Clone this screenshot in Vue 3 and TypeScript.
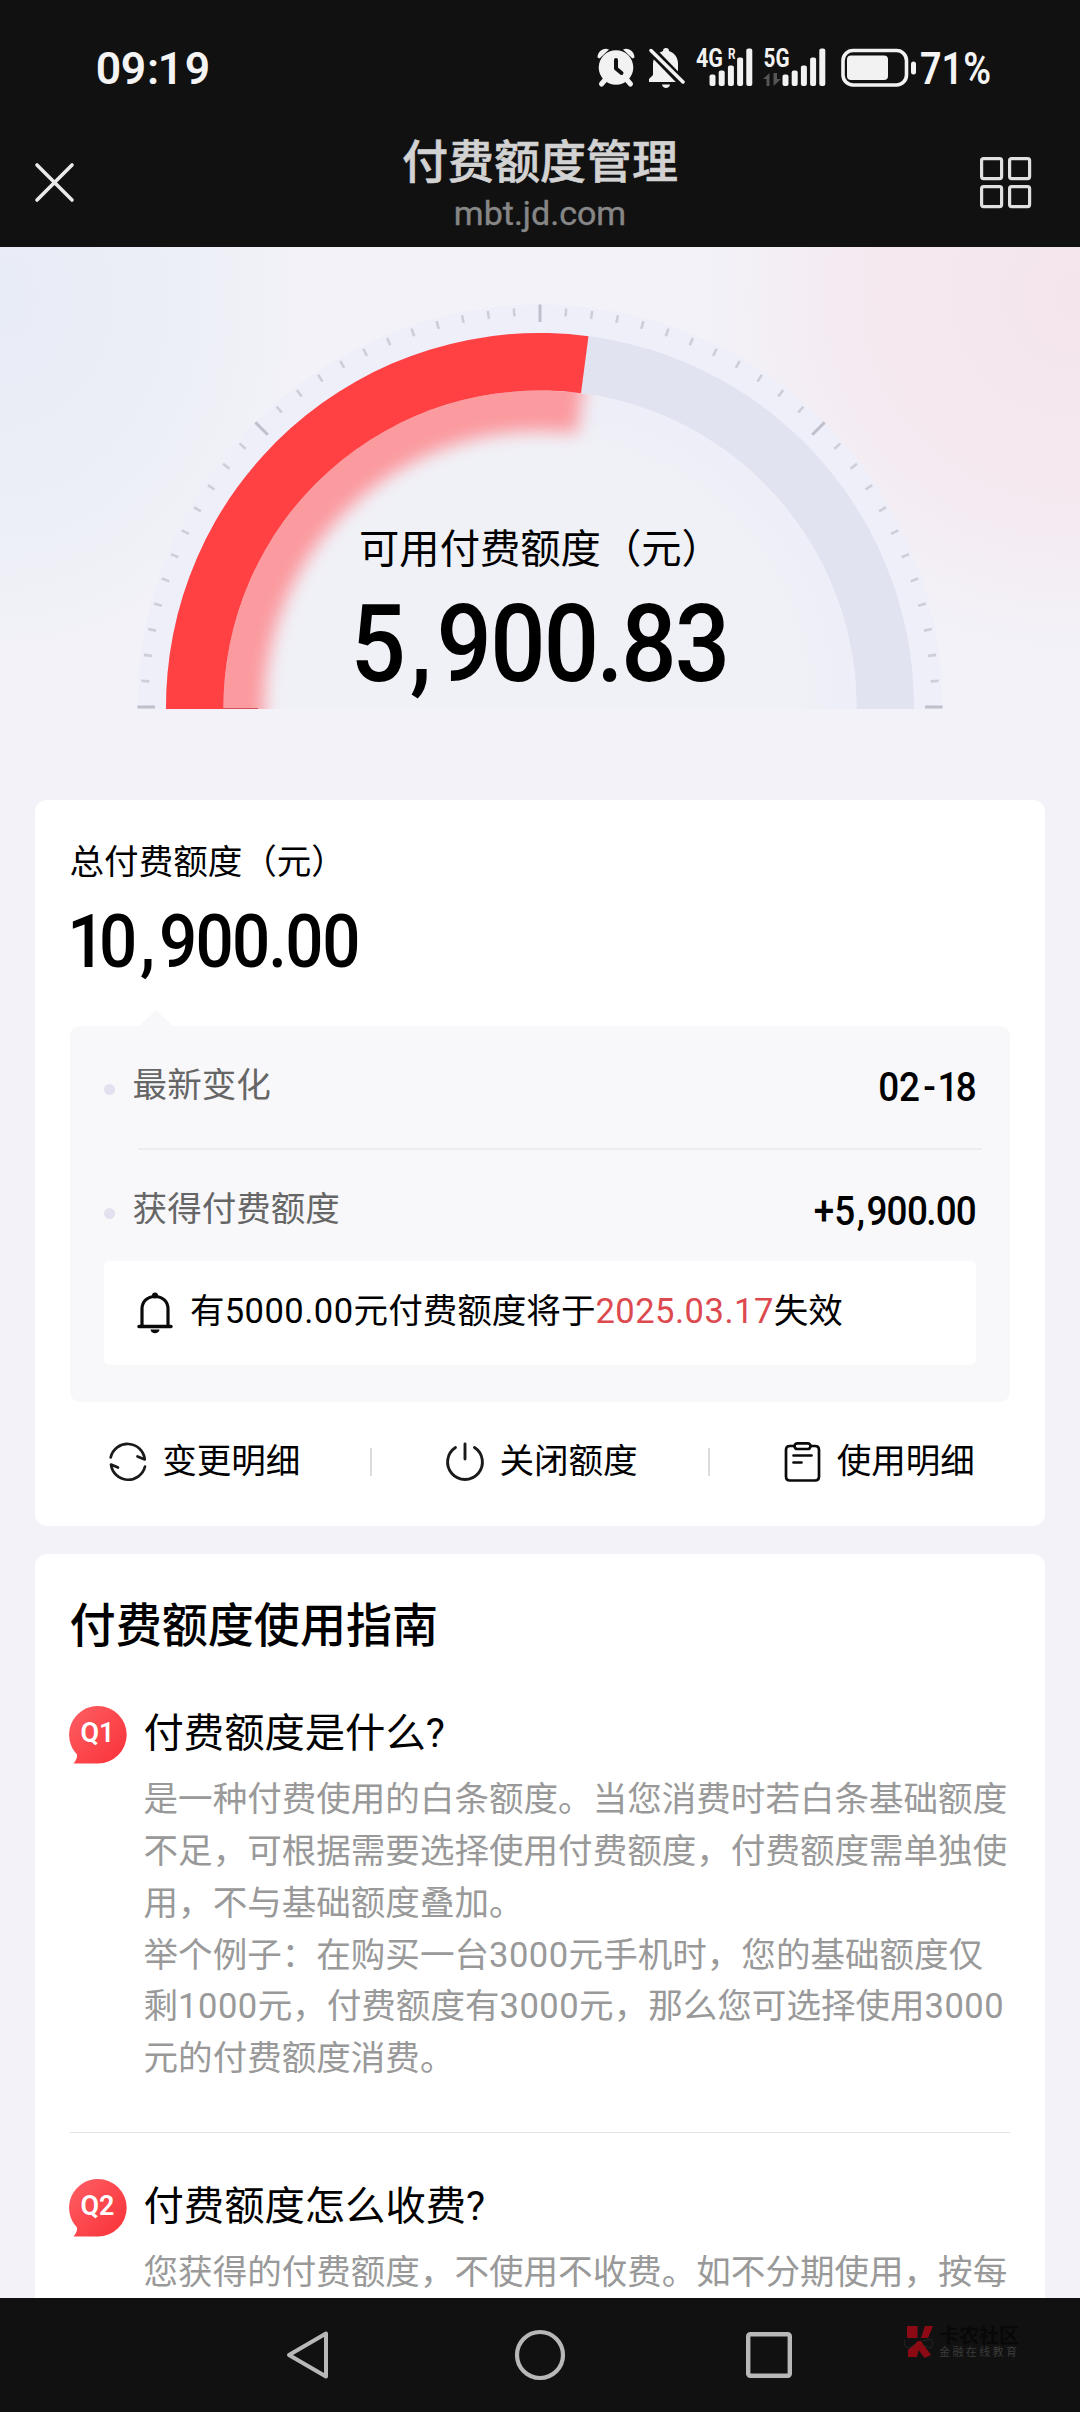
<script setup lang="ts">
interface Glyphs {
  text: string
  xs: number[]
}

interface Question {
  tag: string
  title: string
  lines: string[]
}

const total = 10900
const available = 5900.83

// Gauge geometry, in the coordinates of the hero area.
const cx = 540
const cy = 460
const outerR = 374
const innerR = 316.5

function polar(r: number, deg: number): string {
  const a = (deg * Math.PI) / 180
  return `${(cx - r * Math.cos(a)).toFixed(2)} ${(cy - r * Math.sin(a)).toFixed(2)}`
}

function band(ro: number, ri: number, from: number, to: number): string {
  const large = to - from > 180 ? 1 : 0
  return `M${polar(ro, from)}A${ro} ${ro} 0 ${large} 1 ${polar(ro, to)}L${polar(ri, to)}A${ri} ${ri} 0 ${large} 0 ${polar(ri, from)}Z`
}

const usedAngle = (available / total) * 180
const ticks = Array.from({ length: 49 }, (_, i) => {
  const major = i % 12 === 0
  const deg = i * 3.75
  return {
    major,
    d: major ? `M${polar(402.5, deg)}L${polar(385, deg)}` : `M${polar(399.5, deg)}L${polar(391.5, deg)}`,
  }
})

// Digits are condensed horizontally and set on their own centres.
const squeeze = 0.91
function place(g: Glyphs): string {
  return g.xs.map((x) => (x / squeeze).toFixed(2)).join(' ')
}

const availableText: Glyphs = { text: '5,900.83', xs: [378.3, 421, 464.3, 518, 571.3, 610, 649, 702.5] }
const totalText: Glyphs = { text: '10,900.00', xs: [16.5, 48.2, 77.5, 108.1, 144.6, 181.1, 207.6, 234.4, 271.4] }
const dateText: Glyphs = { text: '02-18', xs: [72.8, 93.5, 113.5, 132, 150.3] }
const gainText: Glyphs = { text: '+5,900.00', xs: [8, 28.8, 45, 61, 81, 101.4, 115.5, 130.3, 150.3] }

const signalBars = [
  { x: 0, y: 26, h: 11.5 },
  { x: 9.2, y: 22, h: 15.5 },
  { x: 18.4, y: 17, h: 20.5 },
  { x: 27.6, y: 9, h: 28.5 },
  { x: 36.8, y: 0, h: 37.5 },
]

function pieces(line: string): { text: string; digits: boolean }[] {
  return line
    .split(/(\d+)/)
    .filter((s) => s !== '')
    .map((s) => ({ text: s, digits: /^\d/.test(s) }))
}

const questions: Question[] = [
  {
    tag: 'Q1',
    title: '付费额度是什么?',
    lines: [
      '是一种付费使用的白条额度。当您消费时若白条基础额度',
      '不足，可根据需要选择使用付费额度，付费额度需单独使',
      '用，不与基础额度叠加。',
      '举个例子：在购买一台3000元手机时，您的基础额度仅',
      '剩1000元，付费额度有3000元，那么您可选择使用3000',
      '元的付费额度消费。',
    ],
  },
  {
    tag: 'Q2',
    title: '付费额度怎么收费?',
    lines: ['您获得的付费额度，不使用不收费。如不分期使用，按每'],
  },
]
</script>

<template>
  <div class="screen">
    <header class="top">
      <div class="status">
        <svg class="time" width="124" height="60" viewBox="0 0 124 60">
          <text x="16.5 41.5 61 78.5 105.5" y="46" text-anchor="middle">09:19</text>
        </svg>
        <div class="status-icons">
          <svg class="alarm" width="38" height="40" viewBox="0 0 38 40">
            <g fill="#f2f2f2">
              <circle cx="19" cy="19.5" r="17.3" />
              <path d="M0.5 9.5C0.5 3 7 -1 12 1.5L2.5 10.5ZM37.500 9.500C37.500 3 31 -1 26 1.500L35.500 10.500Z" />
            </g>
            <path d="M7.500 32.500L4.500 36M30.500 32.500L33.500 36" stroke="#f2f2f2" stroke-width="5" stroke-linecap="round" />
            <path d="M19 12V20.500L24.500 25" fill="none" stroke="#111" stroke-width="4" stroke-linecap="round" stroke-linejoin="round" />
          </svg>
          <svg class="mute" width="36" height="40" viewBox="0 0 36 40">
            <path
              d="M17 0C19 0 20 1 20 3C26 5 29 10 29 16V26L34 34H0V31L4 27V16C4 10 8 5 14 3C14 1 15 0 17 0Z"
              fill="#f2f2f2"
            />
            <path d="M13 36.500H21C20.500 41 13.500 41 13 36.500Z" fill="#f2f2f2" />
            <path d="M-1 -1L36 37" stroke="#111" stroke-width="9" />
            <path d="M2 2.500L34 34" stroke="#f2f2f2" stroke-width="3.500" stroke-linecap="round" />
          </svg>
          <svg class="signal" width="62" height="60" viewBox="-4 -10 62 60">
            <text class="net" x="0" y="18.500" textLength="27" lengthAdjust="spacingAndGlyphs">4G</text>
            <text class="roam" x="32" y="10.500" textLength="7.500" lengthAdjust="spacingAndGlyphs">R</text>
            <rect v-for="b in signalBars" :key="b.x" :x="b.x + 13.500" :y="b.y + 0.500" width="6" :height="b.h" rx="2" fill="#f2f2f2" />
          </svg>
          <svg class="signal second" width="68" height="60" viewBox="-4 -10 68 60">
            <text class="net" x="0.500" y="18.500" textLength="26" lengthAdjust="spacingAndGlyphs">5G</text>
            <path d="M0 31L6.500 25V38H3.500V31ZM10.500 25V38L18 31H14V25Z" fill="#555" />
            <rect v-for="b in signalBars" :key="b.x" :x="b.x + 19.500" :y="b.y + 0.500" width="6" :height="b.h" rx="2" fill="#f2f2f2" />
          </svg>
          <svg class="battery" width="76" height="40" viewBox="0 0 76 40">
            <rect x="2" y="2.500" width="63.500" height="34.500" rx="10" fill="none" stroke="#f2f2f2" stroke-width="3.600" />
            <rect x="6" y="7.500" width="41" height="24.500" rx="4" fill="#f2f2f2" />
            <rect x="70" y="13.500" width="5" height="13" rx="2.500" fill="#f2f2f2" />
          </svg>
          <svg class="percent" width="92" height="60" viewBox="-2 0 92 60">
            <text x="0" y="46" textLength="71" lengthAdjust="spacingAndGlyphs">71%</text>
          </svg>
        </div>
      </div>
      <div class="titlebar">
        <svg class="close" width="40" height="40" viewBox="0 0 40 40">
          <path d="M2 2L37 37M37 2L2 37" stroke="#eaeaea" stroke-width="3.600" stroke-linecap="round" />
        </svg>
        <div class="heading">
          <h1>付费额度管理</h1>
          <p>mbt.jd.com</p>
        </div>
        <svg class="apps" width="52" height="52" viewBox="0 0 52 52">
          <g fill="none" stroke="#e0e0e0" stroke-width="3.200">
            <rect x="1.600" y="1.600" width="20" height="20" rx="2" />
            <rect x="29.600" y="1.600" width="20" height="20" rx="2" />
            <rect x="1.600" y="29.600" width="20" height="20" rx="2" />
            <rect x="29.600" y="29.600" width="20" height="20" rx="2" />
          </g>
        </svg>
      </div>
    </header>

    <main class="page">
      <svg class="gauge" width="1080" height="553" viewBox="0 0 1080 553">
        <defs>
          <clipPath id="halfClip"><rect x="100" y="0" width="880" height="462" /></clipPath>
          <clipPath id="innerClip"><path :d="`M${cx - innerR} 462V460A${innerR} ${innerR} 0 0 1 ${cx + innerR} 460V462Z`" /></clipPath>
          <filter id="glow" x="-20%" y="-20%" width="140%" height="140%"><feGaussianBlur stdDeviation="8.500" /></filter>
          <filter id="softGlow" x="-20%" y="-20%" width="140%" height="140%"><feGaussianBlur stdDeviation="14" /></filter>
        </defs>
        <g clip-path="url(#halfClip)">
          <circle :cx="cx" :cy="cy" r="402.500" fill="#eeeff8" />
          <circle :cx="cx" :cy="cy" :r="outerR" fill="#e1e3f1" />
          <circle :cx="cx" :cy="cy" :r="innerR" fill="#f0f1f7" />
          <g clip-path="url(#innerClip)">
            <path :d="band(330, 282, usedAngle, 190)" fill="#edeef8" filter="url(#softGlow)" />
            <path :d="band(334, 276, -20, usedAngle + 0.300)" fill="#fb9a9f" filter="url(#glow)" />
          </g>
          <path :d="band(outerR, innerR, -1, usedAngle)" fill="#ff4144" />
          <rect x="223" y="461" width="35" height="1" fill="#d5525a" />
          <path
            v-for="t in ticks"
            :key="t.d"
            :d="t.d"
            :stroke="t.major ? '#bfc0cb' : '#cdced8'"
            :stroke-width="t.major ? 3 : 2.600"
          />
        </g>
        <text class="gauge-label" x="359" y="315.500">可用付费额度（元）</text>
        <text class="gauge-number" :transform="`scale(${squeeze} 1)`" :x="place(availableText)" y="434.500">{{ availableText.text }}</text>
      </svg>

      <section class="card quota">
        <p class="quota-label">总付费额度（元）</p>
        <svg class="quota-number" width="330" height="124" viewBox="-10 0 330 124">
          <text :transform="`scale(${squeeze} 1)`" :x="place(totalText)" y="81.300">{{ totalText.text }}</text>
        </svg>
        <div class="arrow"></div>
        <div class="panel">
          <div class="row">
            <i class="dot"></i>
            <span class="row-label">最新变化</span>
            <svg class="value" width="184" height="60" viewBox="-12 0 184 60">
              <text :transform="`scale(${squeeze} 1)`" :x="place(dateText)" y="39">{{ dateText.text }}</text>
            </svg>
          </div>
          <div class="row-line"></div>
          <div class="row second">
            <i class="dot"></i>
            <span class="row-label">获得付费额度</span>
            <svg class="value" width="184" height="60" viewBox="-12 0 184 60">
              <text :transform="`scale(${squeeze} 1)`" :x="place(gainText)" y="39.500">{{ gainText.text }}</text>
            </svg>
          </div>
          <div class="notice">
            <svg width="36" height="42" viewBox="0 0 36 42">
              <path d="M5 34V17C5 9.500 10.500 4.500 18 4.500S31 9.500 31 17V34" fill="none" stroke="#0a0a0a" stroke-width="3.200" />
              <path d="M2 34.500H34" stroke="#0a0a0a" stroke-width="3.400" stroke-linecap="round" />
              <circle cx="18" cy="3.500" r="3" fill="#0a0a0a" />
              <path d="M13.500 37.500H22.500C22 42.500 14 42.500 13.500 37.500Z" fill="#0a0a0a" />
            </svg>
            <p>有<span class="digits">5000.00</span>元付费额度将于<em class="digits">2025.03.17</em>失效</p>
          </div>
        </div>
        <div class="actions">
          <a class="action">
            <svg width="38" height="40" viewBox="0 0 38 40">
              <g fill="none" stroke="#1a1a1a" stroke-width="2.700" stroke-linecap="round" stroke-linejoin="round">
                <path d="M1.700 15.500A17.300 17.300 0 0 1 35.800 17.500L28.500 14.500" />
                <path d="M36 24.500A17.300 17.300 0 0 1 2 22.500L9 25.500" />
              </g>
            </svg>
            <span>变更明细</span>
          </a>
          <a class="action">
            <svg width="38" height="40" viewBox="0 0 38 40">
              <g fill="none" stroke="#1a1a1a" stroke-width="2.900" stroke-linecap="round">
                <path d="M9.500 5.500A17.400 17.400 0 1 0 28.500 5.500" />
                <path d="M19 2V17" />
              </g>
            </svg>
            <span>关闭额度</span>
          </a>
          <a class="action">
            <svg width="38" height="40" viewBox="0 0 38 40">
              <g fill="none" stroke="#0a0a0a" stroke-width="2.700" stroke-linecap="round">
                <path d="M10.500 4H6Q2 4 2 8V34.500Q2 38.500 6 38.500H31Q35 38.500 35 34.500V8Q35 4 31 4H26.500" />
                <rect x="10.500" y="1.400" width="16" height="5.600" rx="2.800" />
                <path d="M9.500 13.500H27.500M9.500 20.500H17.500" />
              </g>
            </svg>
            <span>使用明细</span>
          </a>
        </div>
      </section>

      <section class="card guide">
        <h2>付费额度使用指南</h2>
        <article v-for="q in questions" :key="q.tag" class="qa">
          <svg class="badge" width="58" height="58" viewBox="0 0 58 58">
            <defs>
              <linearGradient :id="`badge${q.tag}`" x1="0" y1="0" x2="1" y2="1">
                <stop offset="0" stop-color="#fd5f64" />
                <stop offset="1" stop-color="#fa3138" />
              </linearGradient>
            </defs>
            <path d="M29 0A28.700 28.700 0 0 1 29 57.400H4.500C7.500 54 8.500 51 8 48.500A28.700 28.700 0 0 1 29 0Z" :fill="`url(#badge${q.tag})`" />
            <text x="11.500" y="36" textLength="34" lengthAdjust="spacingAndGlyphs">{{ q.tag }}</text>
          </svg>
          <div class="qa-text">
            <h3>{{ q.title }}</h3>
            <p v-for="line in q.lines" :key="line"><span v-for="(s, i) in pieces(line)" :key="i" :class="{ digits: s.digits }">{{ s.text }}</span></p>
          </div>
        </article>
      </section>
    </main>

    <nav class="keys">
      <svg class="back" width="46" height="52" viewBox="0 0 46 52">
        <path d="M4 26L41 4.500V47.500Z" fill="none" stroke="#b8b8b8" stroke-width="4" stroke-linejoin="round" />
      </svg>
      <svg class="home" width="52" height="52" viewBox="0 0 52 52">
        <circle cx="26" cy="26" r="23" fill="none" stroke="#b8b8b8" stroke-width="4.200" />
      </svg>
      <svg class="recent" width="48" height="52" viewBox="0 0 48 52">
        <rect x="3.200" y="5.200" width="41.600" height="41.600" rx="2" fill="none" stroke="#b8b8b8" stroke-width="4.400" />
      </svg>
      <div class="mark">
        <svg width="32" height="34" viewBox="0 0 32 34">
          <g fill="#8c0a14">
            <path d="M4 1H14.500V13H4ZM18 13L22 1H30L25 13ZM5 32V25L15 16H18L28 30L21.500 33L15.500 25L14 32Z" />
          </g>
          <path d="M2 15Q-1 22 7 23L13 18M19 16L28 14Q32 20 27 23L20 20" fill="none" stroke="#242424" stroke-width="1" />
        </svg>
        <div class="mark-text">
          <b>卡农社区</b>
          <small>金融在线教育</small>
        </div>
      </div>
    </nav>
  </div>
</template>

<style>
body {
  margin: 0;
  background: #111;
}
</style>

<style scoped>
.screen {
  width: 1080px;
  height: 2412px;
  display: flex;
  flex-direction: column;
  overflow: hidden;
  background: #f2f2f8;
  font-family: Roboto, 'Noto Sans CJK SC', sans-serif;
  color: #000;
}

h1,
h2,
h3,
p {
  margin: 0;
  font-weight: 400;
  white-space: nowrap;
}

svg {
  display: block;
  flex: none;
  overflow: visible;
}

.top {
  height: 247px;
  flex: none;
  background: #111;
}

.status {
  height: 136px;
  box-sizing: border-box;
  padding: 0 70.5px 0 92px;
  display: flex;
  align-items: center;
  justify-content: space-between;
}

.time text,
.percent text {
  font-size: 44.5px;
  font-weight: 600;
  fill: #f4f4f4;
}

.status-icons {
  display: flex;
  align-items: center;
}

.mute {
  margin-left: 14px;
  overflow: hidden;
}

.signal {
  margin-left: 7px;
}

.signal.second {
  margin-left: 5px;
}

.battery {
  margin-left: 14px;
}

.percent {
  margin-left: 1px;
}

.net {
  font-size: 25px;
  font-weight: 700;
  fill: #f2f2f2;
}

.roam {
  font-size: 14px;
  font-weight: 700;
  fill: #f2f2f2;
}

.titlebar {
  height: 111px;
  display: grid;
  grid-template-columns: 1fr auto 1fr;
  align-items: start;
}

.close {
  margin: 27px 0 0 35px;
}

.apps {
  justify-self: end;
  margin: 21px 48px 0 0;
}

.heading {
  text-align: center;
}

.heading h1 {
  margin-top: 1px;
  font-size: 46px;
  font-weight: 500;
  line-height: 50px;
  color: #d2d2d2;
  -webkit-text-stroke: 0.6px #d2d2d2;
}

.heading p {
  margin-top: 6px;
  font-size: 34px;
  line-height: 40px;
  color: #868686;
  -webkit-text-stroke: 0.4px #868686;
}

.page {
  height: 2051px;
  flex: none;
  overflow: hidden;
  background:
    radial-gradient(ellipse 380px 360px at 1080px 50px, #f4e5ed 0%, #f5e9f0 55%, rgba(242, 242, 248, 0) 100%),
    radial-gradient(ellipse 300px 360px at 0 50px, #e8ecf6 0%, #ebeef6 50%, rgba(242, 242, 248, 0) 100%),
    #f2f2f8;
}

.gauge-label {
  font-size: 40.32px;
}

.gauge-number {
  font-size: 107px;
  font-weight: 500;
  text-anchor: middle;
}

.time text,
.quota-number text,
.value text {
  text-anchor: middle;
}

.card {
  margin: 0 35px;
  padding: 0 34.56px;
  background: #fff;
  border-radius: 12px;
}

.quota {
  height: 726px;
  box-sizing: border-box;
  padding-top: 38px;
}

.quota-label {
  font-size: 34.56px;
  line-height: 48px;
}

.quota-number {
  margin-left: -10px;
}

.quota-number text {
  font-size: 74px;
  font-weight: 500;
}

.arrow {
  width: 0;
  margin-left: 69px;
  border: solid transparent;
  border-width: 0 17px 16px;
  border-bottom-color: #f8f8fa;
}

.panel {
  height: 376px;
  box-sizing: border-box;
  padding: 0 34.56px;
  border-radius: 10px;
  background: #f8f8fa;
}

.row {
  height: 122px;
  box-sizing: border-box;
  padding-top: 36px;
  display: flex;
  align-items: flex-start;
}

.row.second {
  height: 111px;
}

.dot {
  width: 11px;
  height: 11px;
  margin: 22px 17.5px 0 0;
  border-radius: 50%;
  background: #e3e1ef;
}

.row-label {
  flex: 1;
  margin-top: -1px;
  font-size: 34.56px;
  line-height: 48px;
  color: #666;
}

.value {
  margin-right: -12px;
}

.value text {
  font-size: 40.5px;
  font-weight: 500;
}

.row-line {
  height: 2px;
  margin: 0 -6px 0 34px;
  background: #ededef;
}

.notice {
  height: 104px;
  box-sizing: border-box;
  padding: 0 0 0 33px;
  display: flex;
  align-items: center;
  border-radius: 6px;
  background: #fff;
}

.notice p {
  margin: -4px 0 0 17px;
  font-size: 34.56px;
  line-height: 48px;
}

.notice em {
  font-style: normal;
  color: #dc4a50;
}

.digits {
  letter-spacing: 0.48px;
}

.actions {
  height: 120px;
  margin: 0 -34.56px;
  display: grid;
  grid-template-columns: 336.5px 338px 335.5px;
}

.action {
  padding-left: 3px;
  display: flex;
  align-items: center;
  justify-content: center;
  gap: 15px;
  background: linear-gradient(#dcdcdc, #dcdcdc) right center / 2px 28px no-repeat;
}

.action:last-child {
  padding-left: 4px;
  background: none;
}

.action span {
  margin-top: -2px;
  font-size: 34.56px;
  line-height: 48px;
}

.guide {
  margin-top: 28px;
  padding-top: 42px;
  padding-bottom: 200px;
}

.guide h2 {
  margin-bottom: 50px;
  font-size: 46.08px;
  font-weight: 500;
  line-height: 60px;
}

.qa {
  display: flex;
  align-items: flex-start;
  gap: 16px;
}

.qa + .qa {
  margin-top: 47px;
  padding-top: 46px;
  border-top: 1px solid #e4e4e4;
}

.badge {
  margin-left: -1px;
}

.badge text {
  font-size: 28px;
  font-weight: 600;
  fill: #fff;
}

.qa-text {
  margin-left: 1px;
}

.qa-text h3 {
  margin-bottom: 12px;
  font-size: 40.32px;
  line-height: 56px;
}

.qa-text p {
  font-size: 34.56px;
  line-height: 51.84px;
  color: #999;
}

.keys {
  height: 114px;
  flex: none;
  display: flex;
  align-items: center;
  background: #111;
}

.back {
  margin-left: 285px;
}

.home {
  margin-left: 183px;
}

.recent {
  margin-left: 179px;
}

.mark {
  margin: -26px 0 0 110px;
  display: flex;
  align-items: center;
  gap: 4px;
}

.mark-text {
  display: flex;
  flex-direction: column;
}

.mark-text b {
  font-size: 20px;
  font-weight: 700;
  line-height: 20px;
  color: #080808;
}

.mark-text small {
  font-size: 11px;
  line-height: 13px;
  letter-spacing: 2.4px;
  color: #3b3b3b;
}
</style>
